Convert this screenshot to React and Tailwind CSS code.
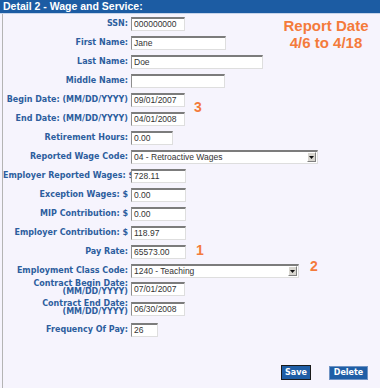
import React from 'react';

const labelFont = { fontFamily: '"DejaVu Sans", Verdana, sans-serif' };

const fields = [
  { label: 'SSN:', value: '000000000', w: 'w-[54px]' },
  { label: 'First Name:', value: 'Jane', w: 'w-[95px]' },
  { label: 'Last Name:', value: 'Doe', w: 'w-[132px]' },
  { label: 'Middle Name:', value: '', w: 'w-[94px]' },
  { label: 'Begin Date: (MM/DD/YYYY)', value: '09/01/2007', w: 'w-[54px]' },
  { label: 'End Date: (MM/DD/YYYY)', value: '04/01/2008', w: 'w-[54px]' },
  { label: 'Retirement Hours:', value: '0.00', w: 'w-[42px]' },
  { label: 'Reported Wage Code:', select: '04 - Retroactive Wages', w: 'w-[187px]' },
  { label: 'Employer Reported Wages: $', value: '728.11', w: 'w-[55px]' },
  { label: 'Exception Wages: $', value: '0.00', w: 'w-[55px]' },
  { label: 'MIP Contribution: $', value: '0.00', w: 'w-[55px]' },
  { label: 'Employer Contribution: $', value: '118.97', w: 'w-[55px]' },
  { label: 'Pay Rate:', value: '65573.00', w: 'w-[55px]' },
  { label: 'Employment Class Code:', select: '1240 - Teaching', w: 'w-[168px]' },
];

const boxCls =
  'h-[14px] bg-white border-t-2 border-t-[#7c7c7c] border-l border-l-[#8e8e8e] border-r border-r-[#dedede] border-b border-b-[#dedede] text-[8.5px] leading-[11px] text-[#333] pl-[2px] whitespace-nowrap overflow-hidden';

function TextBox({ value, w }) {
  return (
    <div className={`${boxCls} ${w}`} style={{ fontFamily: '"Liberation Sans", Arial, sans-serif' }}>
      {value}
    </div>
  );
}

function SelectBox({ value, w }) {
  return (
    <div
      className={`${w} h-[14px] bg-white border-t-2 border-t-[#7c7c7c] border-l border-l-[#8e8e8e] border-r border-r-[#dedede] border-b border-b-[#dedede] flex items-center justify-between pl-[2px] pr-[1px]`}
      style={{ fontFamily: '"Liberation Sans", Arial, sans-serif' }}
    >
      <span className="text-[8.5px] leading-[11px] text-[#333] whitespace-nowrap">{value}</span>
      <span className="w-[9px] h-[10px] bg-[#d8d6d0] border border-t-white border-l-white border-r-[#808080] border-b-[#808080] flex items-center justify-center">
        <svg width="5" height="3" viewBox="0 0 5 3">
          <path d="M0 0 L5 0 L2.5 3 Z" fill="#111" />
        </svg>
      </span>
    </div>
  );
}

function Row({ label, children }) {
  return (
    <div className="flex items-center h-[19px]">
      <div
        className="w-[125px] text-right text-[8px] font-bold text-[#2d5e9e] whitespace-nowrap"
        style={labelFont}
      >
        {label}
      </div>
      <div className="ml-[3px]">{children}</div>
    </div>
  );
}

function TwoLineRow({ line1, line2, value, w }) {
  return (
    <div className="flex items-start h-[20px]">
      <div
        className="w-[125px] text-right text-[8px] leading-[8px] font-bold text-[#2d5e9e] whitespace-nowrap"
        style={labelFont}
      >
        <div>{line1}</div>
        <div>{line2}</div>
      </div>
      <div className="ml-[3px] mt-[2px]">
        <TextBox value={value} w={w} />
      </div>
    </div>
  );
}

export default function App() {
  const orange = 'text-[#f47b3b] font-bold';
  const orangeFont = { fontFamily: '"Liberation Sans", Arial, sans-serif' };

  return (
    <div className="relative w-[380px] h-[388px] bg-[#f6f4fd] overflow-hidden">
      {/* Header */}
      <div
        className="h-[13px] bg-[#1c5ca3] text-white text-[10.5px] font-bold leading-[13px] pl-[3px]"
        style={{ fontFamily: '"Liberation Sans", Tahoma, sans-serif' }}
      >
        Detail 2 - Wage and Service:
      </div>
      <div className="h-[1px] bg-[#c6d4ea]" />

      {/* Form body */}
      <div className="ml-[2px] border-l border-l-[#b4b4b4] h-[374px] flex flex-col">
        {fields.map((f) => (
          <Row key={f.label} label={f.label}>
            {f.select ? <SelectBox value={f.select} w={f.w} /> : <TextBox value={f.value} w={f.w} />}
          </Row>
        ))}
        <TwoLineRow line1="Contract Begin Date:" line2="(MM/DD/YYYY)" value="07/01/2007" w="w-[54px]" />
        <TwoLineRow line1="Contract End Date:" line2="(MM/DD/YYYY)" value="06/30/2008" w="w-[54px]" />
        <Row label="Frequency Of Pay:">
          <TextBox value="26" w="w-[27px]" />
        </Row>

        <div className="flex justify-end items-center gap-[18px] mt-[26px] pr-[12px]" style={labelFont}>
          <button className="w-[30px] h-[15px] bg-[#1f5ea6] border border-[#1a1a1a] text-white text-[8px] font-bold leading-[13px]">
            Save
          </button>
          <button className="w-[39px] h-[14px] bg-[#1f5ea6] border border-[#6f93c4] text-white text-[8px] font-bold leading-[12px]">
            Delete
          </button>
        </div>
      </div>

      {/* Annotations */}
      <div
        className={`absolute left-[280px] top-[17px] w-[92px] text-center text-[15px] leading-[17px] ${orange}`}
        style={orangeFont}
      >
        <div>Report Date</div>
        <div>4/6 to 4/18</div>
      </div>
      <div className={`absolute left-[194px] top-[100px] text-[14px] leading-[14px] ${orange}`} style={orangeFont}>
        3
      </div>
      <div className={`absolute left-[196px] top-[243px] text-[14px] leading-[14px] ${orange}`} style={orangeFont}>
        1
      </div>
      <div className={`absolute left-[310px] top-[259px] text-[14px] leading-[14px] ${orange}`} style={orangeFont}>
        2
      </div>
    </div>
  );
}
